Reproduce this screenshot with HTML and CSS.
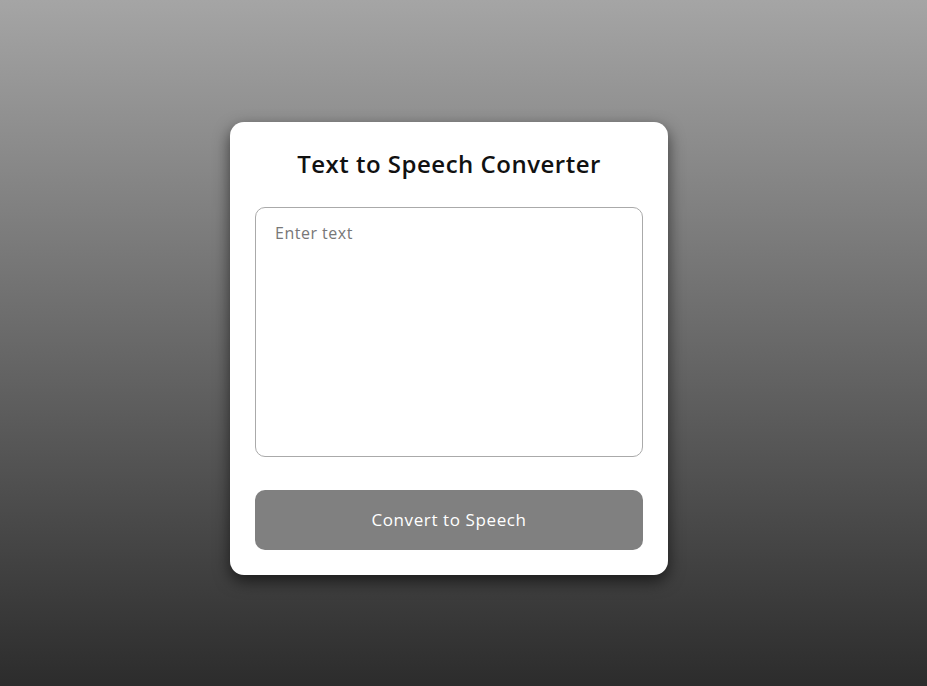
FILE: index.html
```html
<!DOCTYPE html>
<html lang="en">
<head>
<meta charset="utf-8">
<title>Text to Speech Converter</title>
<link rel="stylesheet" href="styles.css">
</head>
<body>
<main class="page">
  <section class="card">
    <h1 class="title">Text to Speech Converter</h1>
    <textarea class="input" placeholder="Enter text"></textarea>
    <button class="convert" type="button">Convert to Speech</button>
  </section>
</main>
</body>
</html>
```

FILE: styles.css
```css
* { box-sizing: border-box; }
html, body { margin: 0; height: 100%; }
body {
  font-family: "Open Sans", "Noto Sans", sans-serif;
  background: linear-gradient(to bottom, #a5a5a5, #2c2c2c);
}
.page {
  height: 100%;
  display: flex;
  align-items: center;
  justify-content: center;
  padding-top: 11px;
  padding-right: 29px;
}
.card {
  width: 438px;
  background: #fff;
  border-radius: 14px;
  padding: 25px;
  display: flex;
  flex-direction: column;
  box-shadow: 0 6px 16px rgba(0, 0, 0, 0.6);
}
.title {
  margin: 0 0 26px;
  font-size: 24px;
  line-height: 34px;
  font-weight: 600;
  letter-spacing: 0.5px;
  text-align: center;
  color: #111;
}
.input {
  display: block;
  width: 100%;
  height: 250px;
  border: 1px solid #aaa;
  border-radius: 10px;
  padding: 13px 19px;
  font-family: inherit;
  font-size: 16px;
  line-height: 24px;
  letter-spacing: 0.5px;
  color: #333;
  resize: none;
  outline: none;
}
.input::placeholder { color: #777; }
.convert {
  margin-top: 33px;
  height: 60px;
  width: 100%;
  border: 0;
  border-radius: 10px;
  background: #808080;
  color: #fff;
  font-family: inherit;
  font-size: 17px;
  letter-spacing: 0.6px;
  padding: 0 0 2px;
  cursor: pointer;
}
```
